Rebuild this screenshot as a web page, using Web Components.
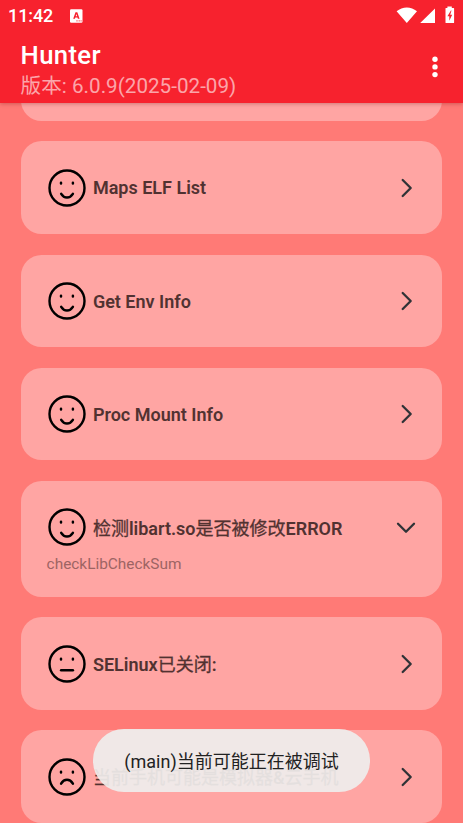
<!DOCTYPE html>
<html lang="zh-CN">
<head>
<meta charset="utf-8">
<title>Hunter</title>
<style>
html,body{margin:0;height:100%;overflow:hidden}
body{font-family:Roboto,"Noto Sans CJK SC",sans-serif;background:#ff7a76}
</style>
</head>
<body>
<hunter-app></hunter-app>
<script>
const define = (name, html, observed = [], update) => customElements.define(name, class extends HTMLElement {
  static observedAttributes = observed;
  constructor() {
    super();
    this.attachShadow({ mode: 'open' }).innerHTML = html;
  }
  attributeChangedCallback() { update(this); }
});

define('status-bar', `
<style>
:host{display:flex;align-items:center;height:32px;box-sizing:border-box;padding:0 8px;color:#fff;font-size:18px;font-weight:500}
svg{display:block;flex:none}
.t{line-height:32px;letter-spacing:-.1px}
.a{margin-left:17px}
.sys{display:flex;margin-left:auto;height:32px}
</style>
<span class="t">11:42</span>
<svg class="a" width="13" height="14" viewBox="0 0 13 14"><rect width="12.500" height="13.500" rx="1.200" y=".2" fill="#fff"/><path d="M3.200 9.800 5.500 3.200H7.300L9.600 9.800H7.900L7.500 8.500H5.300L4.900 9.800ZM5.700 7.200H7.100L6.400 4.900Z" fill="#f7222e" fill-rule="evenodd"/><path d="M6.400 11.900h1.200M8.600 11.900h1.200M10.600 11.900h1" stroke="#f7222e" stroke-width="1"/></svg>
<span class="sys"><svg width="60" height="32" viewBox="395 0 60 32">
<path fill="#fff" d="M396.600 11.200Q401.200 7.400 406.800 7.400T417 11.200L406.800 23.100ZM435 8.500V23H420.200ZM445.800 8h1.600V6.500h4.400V8h1.800q.5 0 .5.500V22.400q0 .6-.6.600h-7.400q-.6 0-.6-.6V8.500q0-.5.3-.5Z"/>
<path fill="#f7222e" d="M450.900 10.500 447.400 16.200H449.300V20.800L452.200 14.800H450.200L451.500 10.500Z"/></svg></span>`);

define('app-bar', `
<style>
:host{display:flex;flex-direction:column;height:103px;background:#f7222e;position:relative;z-index:2;box-shadow:0 1px 4px rgba(90,0,0,.28)}
.row{display:flex;flex:1;padding:0 24.500px 0 20.600px;justify-content:space-between}
h1{margin:7px 0 0;font-size:25.700px;line-height:32px;font-weight:500;letter-spacing:.35px;color:#fff}
p{margin:1px 0 0;font-size:20.600px;line-height:28px;letter-spacing:.03px;color:rgba(255,255,255,.6);white-space:nowrap}
svg{margin-top:22px}
</style>
<status-bar></status-bar>
<div class="row"><div><h1><slot name="title"></slot></h1><p><slot name="version"></slot></p></div>
<svg width="8" height="26" viewBox="0 0 8 26" fill="#fff"><circle cx="4" cy="5.200" r="2.700"/><circle cx="4" cy="12.900" r="2.700"/><circle cx="4" cy="20.600" r="2.700"/></svg></div>`);

const MOUTHS = {
  happy: 'M13.200 24.800Q15.400 28.400 19 28.400T24.900 24.800',
  flat: 'M13.100 25.200H24.900',
  sad: 'M13.100 25.600Q15.400 21.800 19 21.800T24.900 25.600'
};

define('mood-face', `
<style>:host{display:block;width:38px;height:38px;flex:none}svg{display:block}</style>
<svg width="38" height="38" viewBox="0 0 38 38" fill="none" stroke="#000" stroke-linecap="round"><circle cx="19" cy="19" r="17.500" stroke-width="2.400"/><path d="M13 13.700v.9M24.900 13.700v.9" stroke-width="2.500"/><path id="mouth" stroke-width="2.500"/></svg>`,
['mood'], el => el.shadowRoot.getElementById('mouth').setAttribute('d', MOUTHS[el.getAttribute('mood')]));

define('check-card', `
<style>
:host{display:block;box-sizing:border-box;height:92.600px;flex:none;background:#ffa5a3;border-radius:20.600px;padding:27.300px 26px 0 27px}
:host([open]){height:115.600px}
.head{display:flex;align-items:center;height:38px}
.title{flex:1;margin-left:7.300px;padding-top:var(--drop,2px);font-size:18px;line-height:24px;font-weight:600;color:#513231;white-space:nowrap}
.detail{font-size:15.400px;line-height:20px;margin:7.500px 0 0 -1px;color:#9d6463}
:host(:not([open])) .detail{display:none}
.arrow{display:block;width:20px;height:20px;flex:none}
:host([open]) .arrow{transform:rotate(90deg)}
</style>
<div class="head"><mood-face></mood-face><span class="title"><slot></slot></span>
<svg class="arrow" viewBox="0 0 20 20" fill="none" stroke="#303337" stroke-width="2.300" stroke-linecap="round" stroke-linejoin="round"><path d="M6.700 2 14.700 10 6.700 18"/></svg></div>
<div class="detail"><slot name="detail"></slot></div>`,
['mood'], el => el.shadowRoot.querySelector('mood-face').setAttribute('mood', el.getAttribute('mood')));

define('toast-message', `
<style>:host{position:absolute;z-index:3;left:93px;top:729px;width:277px;height:63px;box-sizing:border-box;border-radius:31px;background:rgba(239,237,236,.93);display:flex;align-items:center;justify-content:center;font-size:18px;line-height:24px;color:#222;white-space:nowrap;padding-top:3px}</style><slot></slot>`);

define('hunter-app', `
<style>
:host{display:flex;flex-direction:column;position:relative;width:463px;height:823px;overflow:hidden;background:#ff7a76}
main{flex:1;min-height:0;display:flex;flex-direction:column;justify-content:flex-end;gap:20.600px;padding:0 20.600px;overflow:hidden}
i{font-style:normal;font-weight:400;-webkit-text-stroke:.3px currentColor}
</style>
<app-bar><span slot="title">Hunter</span><span slot="version">版本: 6.0.9(2025-02-09)</span></app-bar>
<main>
<check-card mood="happy"></check-card>
<check-card mood="happy" style="--drop:0px">Maps ELF List</check-card>
<check-card mood="happy">Get Env Info</check-card>
<check-card mood="happy">Proc Mount Info</check-card>
<check-card mood="happy" open style="--drop:3px"><i>检测</i>libart.so<i>是否被修改</i>ERROR<span slot="detail">checkLibCheckSum</span></check-card>
<check-card mood="flat">SELinux<i>已关闭</i>:</check-card>
<check-card mood="sad"><i>当前手机可能是模拟器</i>&amp;<i>云手机</i></check-card>
</main>
<toast-message>(main)当前可能正在被调试</toast-message>`);
</script>
</body>
</html>
